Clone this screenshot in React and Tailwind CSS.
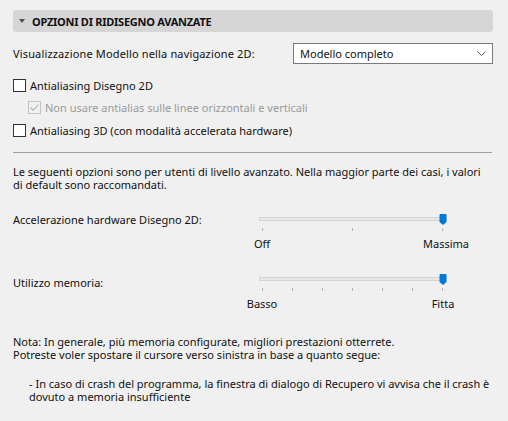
const font = { fontFamily: '"Noto Sans", sans-serif' };

function Checkbox({ checked, disabled }) {
  return (
    <span
      className={`w-[13px] h-[13px] shrink-0 border flex items-center justify-center ${
        disabled ? 'border-[#c4c4c4] bg-[#f0f0f0]' : 'border-[#333333] bg-white'
      }`}
    >
      {checked && (
        <svg width="11" height="11" viewBox="0 0 11 11">
          <path d="M1.5 5.5 L4.2 8.2 L9.5 2.5" fill="none" stroke={disabled ? '#b5b5b5' : '#222'} strokeWidth="1.1" />
        </svg>
      )}
    </span>
  );
}

function Slider({ ticks, left, right }) {
  return (
    <div className="w-[188px] pt-[1px]">
      <div className="relative h-[11px] pt-[3px]">
        <div className="h-[4px] border border-[#d4d4d4] bg-[#e7e7e7]" />
        <svg className="absolute right-0 top-0" width="8" height="11" viewBox="0 0 8 11">
          <path d="M0.5 1 Q0.5 0 1.5 0 H6.5 Q7.5 0 7.5 1 V8 L4 11 L0.5 8 Z" fill="#0078d7" />
        </svg>
      </div>
      <div className="mt-[3px] h-[4px] flex justify-between pl-[3px] pr-[4px]">
        {Array.from({ length: ticks }).map((_, i) => (
          <span key={i} className="w-px h-[3px] bg-[#b4b4b4]" />
        ))}
      </div>
      <div className="mt-[5px] -ml-[17px] -mr-[16px] flex justify-between leading-[13px]">
        <span className="w-[40px] text-center whitespace-nowrap">{left}</span>
        <span className="w-[40px] text-center whitespace-nowrap">{right}</span>
      </div>
    </div>
  );
}

export default function App() {
  return (
    <div
      className="bg-[#f0f0f0] w-[508px] h-[421px] pl-[13px] pr-[15px] pt-[10px] text-[11px] text-[#111] overflow-hidden"
      style={font}
    >
      {/* Section header */}
      <div className="h-[22px] rounded-[3px] bg-[#d6d6d6] flex items-center pl-[6px]">
        <svg width="6" height="4" viewBox="0 0 6 4">
          <path d="M0 0 H6 L3 4 Z" fill="#505050" />
        </svg>
        <span className="ml-[7px] font-bold uppercase leading-[13px] tracking-[-0.25px]">Opzioni di ridisegno avanzate</span>
      </div>

      <div className="mt-[11px] h-[21px] flex items-center justify-between">
        <span className="leading-[13px] tracking-[0.15px]">Visualizzazione Modello nella navigazione 2D:</span>
        <div className="w-[200px] h-[21px] border border-[#7a7a7a] bg-white flex items-center justify-between pl-[6px] pr-[6px]">
          <span className="leading-[13px]">Modello completo</span>
          <svg width="9" height="5" viewBox="0 0 9 5">
            <path d="M0.5 0.5 L4.5 4.5 L8.5 0.5" fill="none" stroke="#555" strokeWidth="1" />
          </svg>
        </div>
      </div>

      <label className="mt-[15px] h-[13px] flex items-center gap-[4px]">
        <Checkbox />
        <span className="leading-[13px]">Antialiasing Disegno 2D</span>
      </label>
      <label className="mt-[9px] h-[13px] flex items-center gap-[4px] pl-[15px] text-[#9a9a9a]">
        <Checkbox checked disabled />
        <span className="leading-[13px]">Non usare antialias sulle linee orizzontali e verticali</span>
      </label>
      <label className="mt-[10px] h-[13px] flex items-center gap-[4px]">
        <Checkbox />
        <span className="leading-[13px]">Antialiasing 3D (con modalità accelerata hardware)</span>
      </label>

      <div className="mt-[15px] mr-[1px] h-px bg-[#a0a0a0]" />

      <p className="mt-[12px] leading-[13px]">
        Le seguenti opzioni sono per utenti di livello avanzato. Nella maggior parte dei casi, i valori
        <br />
        di default sono raccomandati.
      </p>

      <div className="mt-[22px] flex items-start">
        <span className="w-[246px] leading-[13px]">Accelerazione hardware Disegno 2D:</span>
        <Slider ticks={3} left="Off" right="Massima" />
      </div>

      <div className="mt-[23px] flex items-start">
        <span className="w-[246px] leading-[13px] pt-[3px]">Utilizzo memoria:</span>
        <Slider ticks={7} left="Basso" right="Fitta" />
      </div>

      <p className="mt-[25px] leading-[13px]">
        Nota: In generale, più memoria configurate, migliori prestazioni otterrete.
        <br />
        Potreste voler spostare il cursore verso sinistra in base a quanto segue:
      </p>

      <p className="mt-[16px] pl-[16px] leading-[13px]">
        - In caso di crash del programma, la finestra di dialogo di Recupero vi avvisa che il crash è
        <br />
        dovuto a memoria insufficiente
      </p>
    </div>
  );
}
